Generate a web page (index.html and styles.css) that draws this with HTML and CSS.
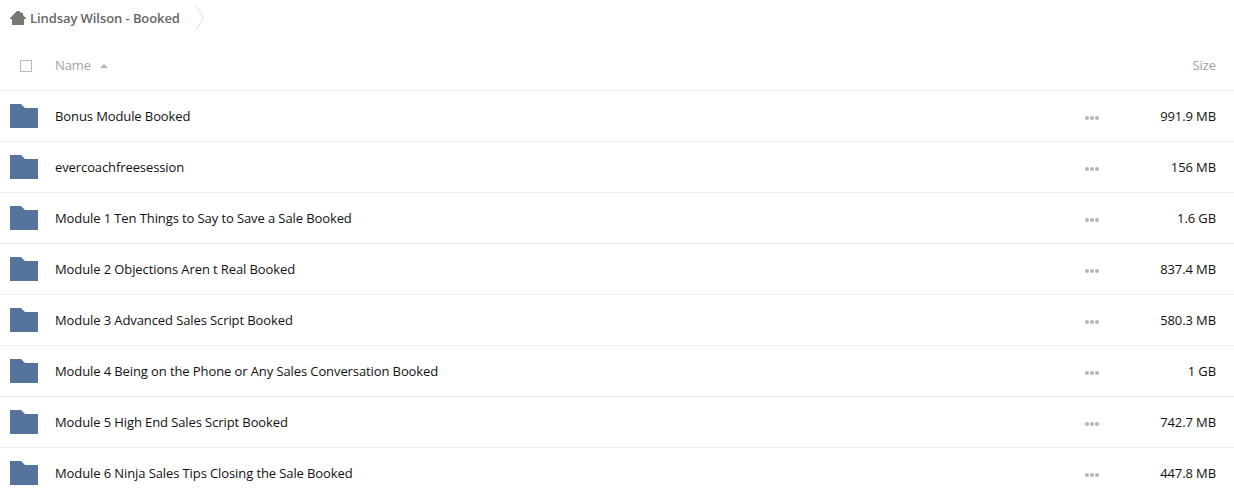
FILE: index.html
```html
<!DOCTYPE html>
<html>
  <head>
    <meta charset="utf-8">
    <title>Lindsay Wilson - Booked</title>
    <link rel="stylesheet" href="styles.css">
  </head>
  <body>
    <div class="crumbs">
      <svg class="home-icon" width="16" height="14" viewBox="0 0 16 14">
        <path d="M6.8 0 H9.2 L11 1.8 H13 V4 L16 7.2 V8 H14 V14 H2 V8 H0 V7.2 Z" fill="#777"/>
      </svg>
      <span class="crumb-name">Lindsay Wilson - Booked</span>
      <svg class="crumb-arrow" width="10" height="26" viewBox="0 0 10 26">
        <path d="M1 0.5 L8.5 13 L1 25.5" fill="none" stroke="#ddd"/>
      </svg>
    </div>

    <div class="row head">
      <div class="check-cell"><span class="check"></span></div>
      <div class="name">Name <span class="sort-arrow"></span></div>
      <div class="size">Size</div>
    </div>

    <div class="row">
      <div class="folder-cell"><svg class="folder" width="28" height="24" viewBox="0 0 28 24"><path d="M0 0 H11 L15 4 H28 V24 H0 Z" fill="#56739c"/></svg></div>
      <div class="name">Bonus Module Booked</div>
      <div class="dots"><i></i><i></i><i></i></div>
      <div class="size">991.9 MB</div>
    </div>
    <div class="row">
      <div class="folder-cell"><svg class="folder" width="28" height="24" viewBox="0 0 28 24"><path d="M0 0 H11 L15 4 H28 V24 H0 Z" fill="#56739c"/></svg></div>
      <div class="name">evercoachfreesession</div>
      <div class="dots"><i></i><i></i><i></i></div>
      <div class="size">156 MB</div>
    </div>
    <div class="row">
      <div class="folder-cell"><svg class="folder" width="28" height="24" viewBox="0 0 28 24"><path d="M0 0 H11 L15 4 H28 V24 H0 Z" fill="#56739c"/></svg></div>
      <div class="name">Module 1 Ten Things to Say to Save a Sale Booked</div>
      <div class="dots"><i></i><i></i><i></i></div>
      <div class="size">1.6 GB</div>
    </div>
    <div class="row">
      <div class="folder-cell"><svg class="folder" width="28" height="24" viewBox="0 0 28 24"><path d="M0 0 H11 L15 4 H28 V24 H0 Z" fill="#56739c"/></svg></div>
      <div class="name">Module 2 Objections Aren t Real Booked</div>
      <div class="dots"><i></i><i></i><i></i></div>
      <div class="size">837.4 MB</div>
    </div>
    <div class="row">
      <div class="folder-cell"><svg class="folder" width="28" height="24" viewBox="0 0 28 24"><path d="M0 0 H11 L15 4 H28 V24 H0 Z" fill="#56739c"/></svg></div>
      <div class="name">Module 3 Advanced Sales Script Booked</div>
      <div class="dots"><i></i><i></i><i></i></div>
      <div class="size">580.3 MB</div>
    </div>
    <div class="row">
      <div class="folder-cell"><svg class="folder" width="28" height="24" viewBox="0 0 28 24"><path d="M0 0 H11 L15 4 H28 V24 H0 Z" fill="#56739c"/></svg></div>
      <div class="name">Module 4 Being on the Phone or Any Sales Conversation Booked</div>
      <div class="dots"><i></i><i></i><i></i></div>
      <div class="size">1 GB</div>
    </div>
    <div class="row">
      <div class="folder-cell"><svg class="folder" width="28" height="24" viewBox="0 0 28 24"><path d="M0 0 H11 L15 4 H28 V24 H0 Z" fill="#56739c"/></svg></div>
      <div class="name">Module 5 High End Sales Script Booked</div>
      <div class="dots"><i></i><i></i><i></i></div>
      <div class="size">742.7 MB</div>
    </div>
    <div class="row">
      <div class="folder-cell"><svg class="folder" width="28" height="24" viewBox="0 0 28 24"><path d="M0 0 H11 L15 4 H28 V24 H0 Z" fill="#56739c"/></svg></div>
      <div class="name">Module 6 Ninja Sales Tips Closing the Sale Booked</div>
      <div class="dots"><i></i><i></i><i></i></div>
      <div class="size">447.8 MB</div>
    </div>
  </body>
</html>
```

FILE: styles.css
```css
html, body {
  height: 496px;
  overflow: hidden;
}
body {
  margin: 0;
  background-color: #fff;
  color: #111;
  font-family: "Open Sans", sans-serif;
  font-size: 13px;
  letter-spacing: -0.1px;
}
.crumbs {
  display: flex;
  align-items: center;
  height: 36px;
  padding-left: 10px;
}
.home-icon {
  margin-right: 4px;
}
.crumb-name {
  font-weight: 600;
  font-size: 13px;
  letter-spacing: -0.08px;
  color: #666;
}
.crumb-arrow {
  margin-left: 15px;
}
.row {
  display: flex;
  align-items: center;
  height: 50px;
  border-bottom: 1px solid #ebebeb;
  padding-right: 18px;
}
.head {
  height: 50px;
  padding-top: 4px;
  color: #a3a3a3;
}
.check-cell {
  width: 55px;
  padding-left: 20px;
  box-sizing: border-box;
}
.check {
  display: block;
  width: 10px;
  height: 10px;
  margin-top: 1px;
  border: 1px solid #bbb;
}
.folder-cell {
  width: 55px;
  padding-left: 10px;
  box-sizing: border-box;
  display: flex;
}
.name {
  flex: 1;
}
.sort-arrow {
  display: inline-block;
  margin-left: 6px;
  vertical-align: 2px;
  border-left: 4px solid transparent;
  border-right: 4px solid transparent;
  border-bottom: 4px solid #b5b5b5;
}
.dots {
  display: flex;
  gap: 1px;
  margin-top: 4px;
  margin-right: 57px;
}
.dots i {
  width: 4px;
  height: 4px;
  border-radius: 50%;
  background-color: #b5b5b5;
}
.size {
  width: 60px;
  text-align: right;
}
```
